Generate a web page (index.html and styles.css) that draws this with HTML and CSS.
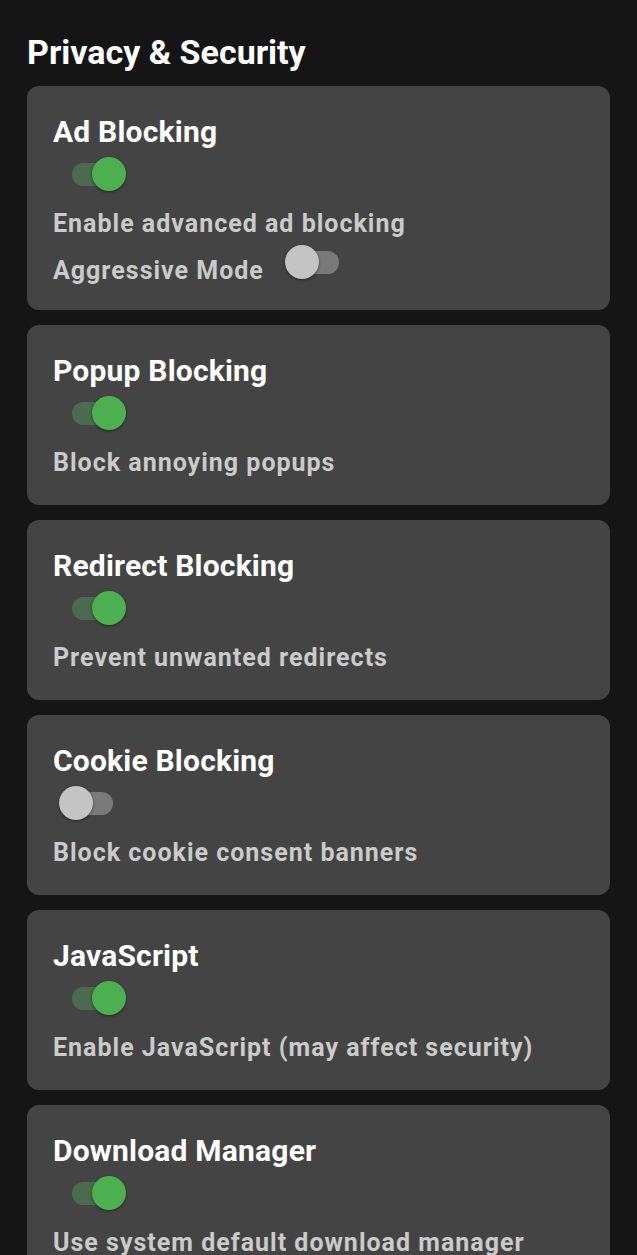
FILE: index.html
```html
<!DOCTYPE html>
<html lang="en">
<head>
  <meta charset="UTF-8" />
  <meta name="viewport" content="width=device-width, initial-scale=1.0" />
  <title>Privacy &amp; Security</title>
  <link rel="stylesheet" href="styles.css">
</head>
<body>
  <h1>Privacy &amp; Security</h1>

  <div class="card">
    <div class="card-title">Ad Blocking</div>
    <div class="switch on"><span class="track"></span><span class="thumb"></span></div>
    <div class="desc">Enable advanced ad blocking</div>
    <div class="sub-row">
      <span class="desc sub-label">Aggressive Mode</span>
      <div class="switch small"><span class="track"></span><span class="thumb"></span></div>
    </div>
  </div>

  <div class="card">
    <div class="card-title">Popup Blocking</div>
    <div class="switch on"><span class="track"></span><span class="thumb"></span></div>
    <div class="desc">Block annoying popups</div>
  </div>

  <div class="card">
    <div class="card-title">Redirect Blocking</div>
    <div class="switch on"><span class="track"></span><span class="thumb"></span></div>
    <div class="desc">Prevent unwanted redirects</div>
  </div>

  <div class="card">
    <div class="card-title">Cookie Blocking</div>
    <div class="switch"><span class="track"></span><span class="thumb"></span></div>
    <div class="desc">Block cookie consent banners</div>
  </div>

  <div class="card">
    <div class="card-title">JavaScript</div>
    <div class="switch on"><span class="track"></span><span class="thumb"></span></div>
    <div class="desc">Enable JavaScript (may affect security)</div>
  </div>

  <div class="card">
    <div class="card-title">Download Manager</div>
    <div class="switch on"><span class="track"></span><span class="thumb"></span></div>
    <div class="desc">Use system default download manager</div>
  </div>
</body>
</html>
```

FILE: styles.css
```css
body {
  font-family: Roboto, "Noto Sans", Arial, sans-serif;
  background-color: #151515;
  color: #fff;
  margin: 0;
  padding: 32px 27px 27px;
}
h1 {
  font-size: 34px;
  line-height: 40px;
  font-weight: 700;
  margin: 0 0 14px;
}
.card {
  background-color: #444444;
  border-radius: 12px;
  padding: 28px 26px 26px;
  margin-bottom: 15px;
}
.card-title {
  font-size: 30px;
  line-height: 36px;
  font-weight: 700;
  letter-spacing: 0.2px;
  color: #fff;
}
.desc {
  font-size: 25px;
  line-height: 32px;
  font-weight: 700;
  letter-spacing: 1px;
  color: #cbcbcb;
  margin-top: 10px;
}
.sub-row {
  display: flex;
  align-items: flex-start;
  height: 44px;
}
.sub-label {
  margin-top: 15px;
}
.switch {
  position: relative;
  width: 67px;
  height: 48px;
  margin-left: 6px;
}
.switch.small {
  height: 44px;
  margin-left: 21px;
}
.switch .track {
  position: absolute;
  left: 13px;
  top: 50%;
  width: 41px;
  height: 23px;
  margin-top: -11.5px;
  border-radius: 12px;
  background-color: #7a7a7a;
}
.switch .thumb {
  position: absolute;
  left: 0;
  top: 50%;
  width: 34px;
  height: 34px;
  margin-top: -17px;
  border-radius: 50%;
  background-color: #c4c4c4;
  box-shadow: 0 1px 3px rgba(0, 0, 0, 0.45);
}
.switch.on .track {
  background-color: #4c6b4e;
}
.switch.on .thumb {
  left: 33px;
  background-color: #4caf50;
}
```
